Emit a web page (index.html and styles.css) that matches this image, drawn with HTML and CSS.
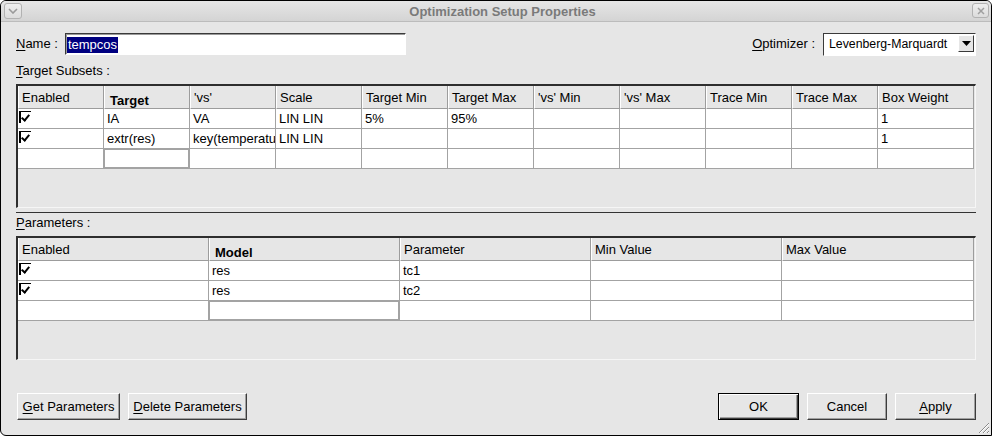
FILE: index.html
```html
<!DOCTYPE html>
<html>
<head>
<meta charset="utf-8">
<title>Optimization Setup Properties</title>
<link rel="stylesheet" href="styles.css">
</head>
<body>
<div class="window">
  <div class="titlebar">
    <span class="tb-btn tb-menu"><svg width="10" height="6" viewBox="0 0 10 6"><polyline points="1,1 5,5 9,1" fill="none" stroke="#9a9a9a" stroke-width="1.6"/></svg></span>
    <span class="title">Optimization Setup Properties</span>
    <span class="tb-btn tb-close"><svg width="8" height="8" viewBox="0 0 8 8"><path d="M1 1L7 7M7 1L1 7" stroke="#a0a0a0" stroke-width="1.5"/></svg></span>
  </div>
  <div class="content">
    <div class="name-row">
      <span class="lbl lbl-name"><u>N</u>ame :</span>
      <div class="textfield"><span class="sel">tempcos</span></div>
      <div class="spacer"></div>
      <span class="lbl lbl-opt"><u>O</u>ptimizer :</span>
      <div class="combo">
        <span class="combo-text">Levenberg-Marquardt</span>
        <span class="combo-btn"><svg width="9" height="5" viewBox="0 0 9 5"><polygon points="0,0 9,0 4.5,5" fill="#000"/></svg></span>
      </div>
    </div>
    <div class="section-label sl-target"><u>T</u>arget Subsets :</div>
    <div class="frame">
      <div class="grid grid1">
        <div class="h">Enabled</div>
        <div class="h b">Target</div>
        <div class="h">'vs'</div>
        <div class="h">Scale</div>
        <div class="h">Target Min</div>
        <div class="h">Target Max</div>
        <div class="h">'vs' Min</div>
        <div class="h">'vs' Max</div>
        <div class="h">Trace Min</div>
        <div class="h">Trace Max</div>
        <div class="h">Box Weight</div>

        <div class="c chk"><span class="cb"></span></div>
        <div class="c">IA</div>
        <div class="c">VA</div>
        <div class="c">LIN LIN</div>
        <div class="c">5%</div>
        <div class="c">95%</div>
        <div class="c"></div>
        <div class="c"></div>
        <div class="c"></div>
        <div class="c"></div>
        <div class="c">1</div>

        <div class="c chk"><span class="cb"></span></div>
        <div class="c">extr(res)</div>
        <div class="c">key(temperatu</div>
        <div class="c">LIN LIN</div>
        <div class="c"></div>
        <div class="c"></div>
        <div class="c"></div>
        <div class="c"></div>
        <div class="c"></div>
        <div class="c"></div>
        <div class="c">1</div>

        <div class="c"></div>
        <div class="c focus"></div>
        <div class="c"></div>
        <div class="c"></div>
        <div class="c"></div>
        <div class="c"></div>
        <div class="c"></div>
        <div class="c"></div>
        <div class="c"></div>
        <div class="c"></div>
        <div class="c"></div>
      </div>
    </div>
    <div class="split"></div>
    <div class="section-label sl-param"><u>P</u>arameters :</div>
    <div class="frame frame2">
      <div class="grid grid2">
        <div class="h">Enabled</div>
        <div class="h b">Model</div>
        <div class="h">Parameter</div>
        <div class="h">Min Value</div>
        <div class="h">Max Value</div>

        <div class="c chk"><span class="cb"></span></div>
        <div class="c">res</div>
        <div class="c">tc1</div>
        <div class="c"></div>
        <div class="c"></div>

        <div class="c chk"><span class="cb"></span></div>
        <div class="c">res</div>
        <div class="c">tc2</div>
        <div class="c"></div>
        <div class="c"></div>

        <div class="c"></div>
        <div class="c focus"></div>
        <div class="c"></div>
        <div class="c"></div>
        <div class="c"></div>
      </div>
    </div>
    <div class="buttons">
      <button class="btn btn-get"><u>G</u>et Parameters</button>
      <button class="btn btn-del"><u>D</u>elete Parameters</button>
      <div class="spacer"></div>
      <button class="btn btn-ok default">OK</button>
      <button class="btn btn-cancel">Cancel</button>
      <button class="btn btn-apply"><u>A</u>pply</button>
    </div>
  </div>
  <svg class="grip" width="14" height="14" viewBox="0 0 14 14">
    <path d="M13 3L3 13M13 7L7 13M13 11L11 13" stroke="#8a8a8a" stroke-width="1"/>
    <path d="M13 4L4 13M13 8L8 13M13 12L12 13" stroke="#ffffff" stroke-width="1"/>
  </svg>
</div>
</body>
</html>
```

FILE: styles.css
```css
* { box-sizing: border-box; }
html, body { margin: 0; padding: 0; }
body {
  width: 992px;
  height: 436px;
  background: #ffffff;
  font-family: "Liberation Sans", Arial, sans-serif;
  font-size: 13px;
  color: #000;
  overflow: hidden;
}
u { text-decoration: underline; text-underline-offset: 2px; }

.window {
  position: relative;
  width: 992px;
  height: 436px;
  background: #e6e6e6;
  border: 1px solid #000;
  border-radius: 6px 6px 0 6px;
  display: flex;
  flex-direction: column;
  overflow: hidden;
}

.titlebar {
  flex: none;
  height: 21px;
  background: linear-gradient(#e6e6e6, #d4d4d4);
  border-bottom: 1px solid #bcbcbc;
  display: flex;
  align-items: center;
  padding: 0 2px 1px 3px;
}
.tb-btn {
  flex: none;
  display: flex;
  align-items: center;
  justify-content: center;
  border: 1px solid #b2b2b2;
  border-radius: 3px;
  background: linear-gradient(#eeeeee, #dcdcdc);
}
.tb-menu { width: 18px; height: 16px; }
.tb-close { width: 17px; height: 15px; }
.title {
  flex: 1;
  text-align: center;
  font-weight: bold;
  font-size: 13px;
  color: #7a7a7a;
  padding-left: 11px;
  padding-top: 2px;
}

.content {
  flex: 1;
  display: flex;
  flex-direction: column;
  padding: 11px 15px 0 15px;
}

.name-row {
  flex: none;
  height: 22px;
  display: flex;
  align-items: center;
}
.lbl { line-height: 16px; white-space: nowrap; }
.lbl-name { margin-right: 7px; }
.lbl-opt { margin-right: 8px; }
.spacer { flex: 1; }

.textfield {
  width: 341px;
  height: 22px;
  background: #fff;
  border: 1px solid;
  border-color: #3a3a3a #ffffff #ffffff #3a3a3a;
  box-shadow: inset 1px 1px 0 #9a9a9a;
  padding: 3px 0 0 1px;
}
.sel {
  display: inline-block;
  background: #000080;
  color: #fff;
  line-height: 16px;
  height: 16px;
  padding: 0 1px;
}

.combo {
  width: 153px;
  height: 23px;
  background: #fff;
  border: 1px solid;
  border-color: #3a3a3a #ffffff #ffffff #3a3a3a;
  display: flex;
  align-items: center;
  padding: 0 1px 0 5px;
}
.combo-text { flex: 1; font-size: 12.3px; white-space: nowrap; }
.combo-btn {
  width: 16px;
  height: 17px;
  background: #e6e6e6;
  border: 1px solid;
  border-color: #ffffff #3a3a3a #3a3a3a #ffffff;
  display: flex;
  align-items: center;
  justify-content: center;
  align-self: flex-start;
  margin-top: 1px;
}

.section-label {
  flex: none;
  height: 16px;
  line-height: 16px;
}
.sl-target { margin-top: 8px; }
.sl-param { margin-top: 2px; }

.frame {
  flex: none;
  height: 124px;
  margin-top: 5px;
  background: #e6e6e6;
  border-style: solid;
  border-width: 2px 1px 1px 2px;
  border-color: #2e2e2e #f6f6f6 #f6f6f6 #2e2e2e;
  padding-right: 1px;
}
.frame2 { margin-top: 5px; }

.grid { display: grid; }
.grid1 { grid-template-columns: repeat(10, 86px) 96px; }
.grid2 { grid-template-columns: 191px 191px 191px 191px 192px; }

.h {
  height: 23px;
  background: #e6e6e6;
  border-left: 1px solid #ffffff;
  border-right: 1px solid #9c9c9c;
  border-bottom: 1px solid #9c9c9c;
  padding: 2px 0 0 3px;
  line-height: 19px;
  white-space: nowrap;
  overflow: hidden;
}
.h.b { font-weight: bold; padding-top: 5px; padding-left: 5px; }

.c {
  height: 20px;
  background: #fff;
  border-right: 1px solid #a3a3a3;
  border-bottom: 1px solid #a3a3a3;
  padding: 1px 0 0 3px;
  line-height: 18px;
  white-space: nowrap;
  overflow: hidden;
}
.c.chk { padding: 2px 0 0 1px; }
.c.focus { box-shadow: inset 0 0 0 1px #a3a3a3; }

.cb {
  display: block;
  width: 12px;
  height: 12px;
  border-top: 1px solid #000;
  border-left: 2px solid #000;
  background: #fff;
  position: relative;
}
.cb::after {
  content: "";
  position: absolute;
  left: 2px;
  top: 1px;
  width: 3px;
  height: 6px;
  border-right: 2px solid #000;
  border-bottom: 2px solid #000;
  transform: rotate(40deg);
  transform-origin: center;
}

.split {
  flex: none;
  height: 1px;
  margin-top: 4px;
  background: #333;
}

.buttons {
  flex: none;
  display: flex;
  gap: 8px;
  margin-top: 33px;
  padding-left: 1px;
}
.btn {
  height: 27px;
  padding: 0 4px;
  margin: 0;
  background: #e6e6e6;
  font-family: "Liberation Sans", Arial, sans-serif;
  font-size: 13px;
  color: #000;
  border: 1px solid;
  border-color: #ffffff #3c3c3c #3c3c3c #ffffff;
  box-shadow: inset -1px -1px 0 #a0a0a0;
  border-radius: 0;
  white-space: nowrap;
}
.btn-get { width: 103px; }
.btn-del { width: 119px; }
.btn-ok { width: 81px; }
.btn-cancel { width: 80px; }
.btn-apply { width: 81px; }
.btn.default {
  border: 1px solid #000;
  box-shadow: inset 1px 1px 0 #ffffff, inset -1px -1px 0 #3c3c3c, inset -2px -2px 0 #a0a0a0;
}

.grip {
  position: absolute;
  right: 1px;
  bottom: 1px;
}
```
